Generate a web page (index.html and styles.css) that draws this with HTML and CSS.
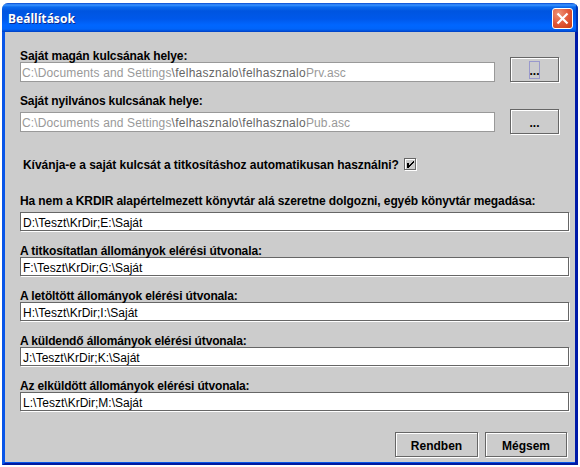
FILE: index.html
```
<!DOCTYPE html>
<html lang="hu">
<head>
<meta charset="utf-8">
<title>Beállítások</title>
<link rel="stylesheet" href="styles.css">
</head>
<body>
<div class="window">
  <header class="titlebar">
    <h1 class="title">Beállítások</h1>
    <button class="close" aria-label="Bezárás"><svg width="21" height="21" viewBox="0 0 21 21"><path d="M5.5 5.5 15.5 15.5M15.5 5.5 5.5 15.5" stroke="#fff" stroke-width="2.2" fill="none"/></svg></button>
  </header>
  <main class="content">
    <section class="key">
      <div class="key-main">
        <div class="label"><span class="l1">Saját magán kulcsának helye:</span></div>
        <div class="field disabled"><span class="path">C:\Documents and Settings<b>\felhasznalo\felhasznalo</b>Prv.asc</span></div>
      </div>
      <button class="button browse"><span class="focus">...</span></button>
    </section>
    <section class="key public">
      <div class="key-main">
        <div class="label"><span class="l2">Saját nyilvános kulcsának helye:</span></div>
        <div class="field disabled"><span class="path">C:\Documents and Settings<b>\felhasznalo\felhasznalo</b>Pub.asc</span></div>
      </div>
      <button class="button browse"><span class="dots">...</span></button>
    </section>
    <div class="auto">
      <span class="question">Kívánja-e a saját kulcsát a titkosításhoz automatikusan használni?</span>
      <span class="check"><svg width="12" height="12" viewBox="0 0 12 12" shape-rendering="crispEdges"><path d="M3 5h2v2h1v-1h1v-1h1v-1h1v-1h1v2h-1v1h-1v1h-1v1h-1v1h-1v1h-2z" fill="#000"/></svg></span>
    </div>
    <section class="row first">
      <div class="label"><span class="l3">Ha nem a KRDIR alapértelmezett könyvtár alá szeretne dolgozni, egyéb könyvtár megadása:</span></div>
      <div class="field"><span class="value">D:\Teszt\KrDir;E:\Saját</span></div>
    </section>
    <section class="row">
      <div class="label"><span class="l4">A titkosítatlan állományok elérési útvonala:</span></div>
      <div class="field"><span class="value">F:\Teszt\KrDir;G:\Saját</span></div>
    </section>
    <section class="row">
      <div class="label"><span class="l5">A letöltött állományok elérési útvonala:</span></div>
      <div class="field"><span class="value">H:\Teszt\KrDir;I:\Saját</span></div>
    </section>
    <section class="row">
      <div class="label"><span class="l6">A küldendő állományok elérési útvonala:</span></div>
      <div class="field"><span class="value">J:\Teszt\KrDir;K:\Saját</span></div>
    </section>
    <section class="row">
      <div class="label"><span class="l7">Az elküldött állományok elérési útvonala:</span></div>
      <div class="field"><span class="value">L:\Teszt\KrDir;M:\Saját</span></div>
    </section>
    <footer class="actions">
      <button class="button ok"><span>Rendben</span></button>
      <button class="button cancel"><span>Mégsem</span></button>
    </footer>
  </main>
</div>
</body>
</html>
```
FILE: styles.css
```
* { box-sizing: border-box; }
body {
  margin: 0;
  padding: 3px 2px 2px;
  height: 467px;
  background: #fff;
  font: 12px/15px "Liberation Sans", Arial, sans-serif;
  color: #000;
  overflow: hidden;
  white-space: nowrap;
}
.window {
  width: 576px;
  height: 462px;
  border-radius: 6px 6px 0 0;
  background: #ccc;
  overflow: hidden;
  display: flex;
  flex-direction: column;
}
.titlebar {
  height: 29px;
  flex: none;
  display: flex;
  align-items: flex-start;
  justify-content: space-between;
  padding: 5px 5px 0 6px;
  background: linear-gradient(#0a50d8 0, #3a93ff 2px, #0a6aee 4px, #0055e0 8px, #0058ea 16px, #0066ff 22px, #0064fa 26px, #0045c8 29px);
  box-shadow: inset -2px 0 1px #0030b0;
}
.title {
  margin: 3px 0 0;
  font: bold 12px/16px "Noto Sans", sans-serif;
  letter-spacing: .05px;
  color: #fff;
  text-shadow: 1px 1px 0 #0b2a90;
}
.close {
  width: 21px;
  height: 21px;
  padding: 0;
  border: 1px solid #fff;
  border-radius: 3px;
  background: radial-gradient(circle at 30% 25%, #ee9478 0, #e2583a 50%, #c83a12 100%);
  display: flex;
  align-items: center;
  justify-content: center;
}
.close svg { flex: none; }
.content {
  flex: 1;
  padding: 12px 5px 0 15px;
  border: solid;
  border-width: 0 3px 2px;
  border-color: #0831d9;
  border-left-color: #0855e8;
  border-bottom-color: #001aa0;
  border-right-color: #001aa8;
  box-shadow: inset 0 -1px 0 #0855e8;
}
.key { display: flex; height: 50px; gap: 15px; }
.key-main { width: 475px; }
.label {
  height: 18px;
  padding-top: 4px;
  line-height: 17px;
  font-weight: bold;
}
.public .label { padding-top: 0; line-height: 15px; }
.field {
  height: 19px;
  width: 549px;
  padding-left: 2px;
  line-height: 20px;
  background: #fff;
  border: 1px solid #666;
  box-shadow: 1px 1px 0 #fff;
}
.disabled {
  width: 475px;
  height: 20px;
  padding-left: 1px;
  color: #999;
  border-color: #999;
  box-shadow: none;
}
.l1, .l3, .l4 { letter-spacing: -.1px; }
.l2, .l5 { letter-spacing: -.13px; }
.l6, .l7 { letter-spacing: -.145px; }
.path { letter-spacing: .14px; }
.path b { font-weight: normal; color: #666; letter-spacing: .26px; }
.button {
  height: 25px;
  padding: 0;
  border: 1px solid #666;
  border-radius: 0;
  background: #ccc;
  box-shadow: 1px 1px 0 #fff, inset 1px 1px 0 #fff;
  font: bold 12px/15px "Liberation Sans", Arial, sans-serif;
  color: #000;
  display: flex;
  align-items: center;
  justify-content: center;
}
.browse { width: 49px; margin-top: 13px; }
.public .browse { margin-top: 15px; }
.dots { padding-top: 3px; }
.focus { outline: 1px solid #99c; outline-offset: -1px; width: 11px; height: 18px; line-height: 20px; }
.auto {
  height: 50px;
  display: flex;
  padding: 14px 0 0 3px;
  gap: 5px;
  font-weight: bold;
}
.question { line-height: 14px; letter-spacing: -.045px; }
.check {
  width: 12px;
  height: 12px;
  border: 1px solid #666;
  box-shadow: 1px 1px 0 #fff, inset 1px 1px 0 #fff;
}
.check svg { display: block; margin: -1px; }
.row { height: 45px; }
.first .label { padding-top: 1px; line-height: 13px; }
.actions {
  display: flex;
  gap: 7px;
  justify-content: flex-end;
  padding: 13px 3px 0 0;
}
.actions .button { padding-top: 3px; }
.ok { width: 83px; }
.cancel { width: 82px; }
```
